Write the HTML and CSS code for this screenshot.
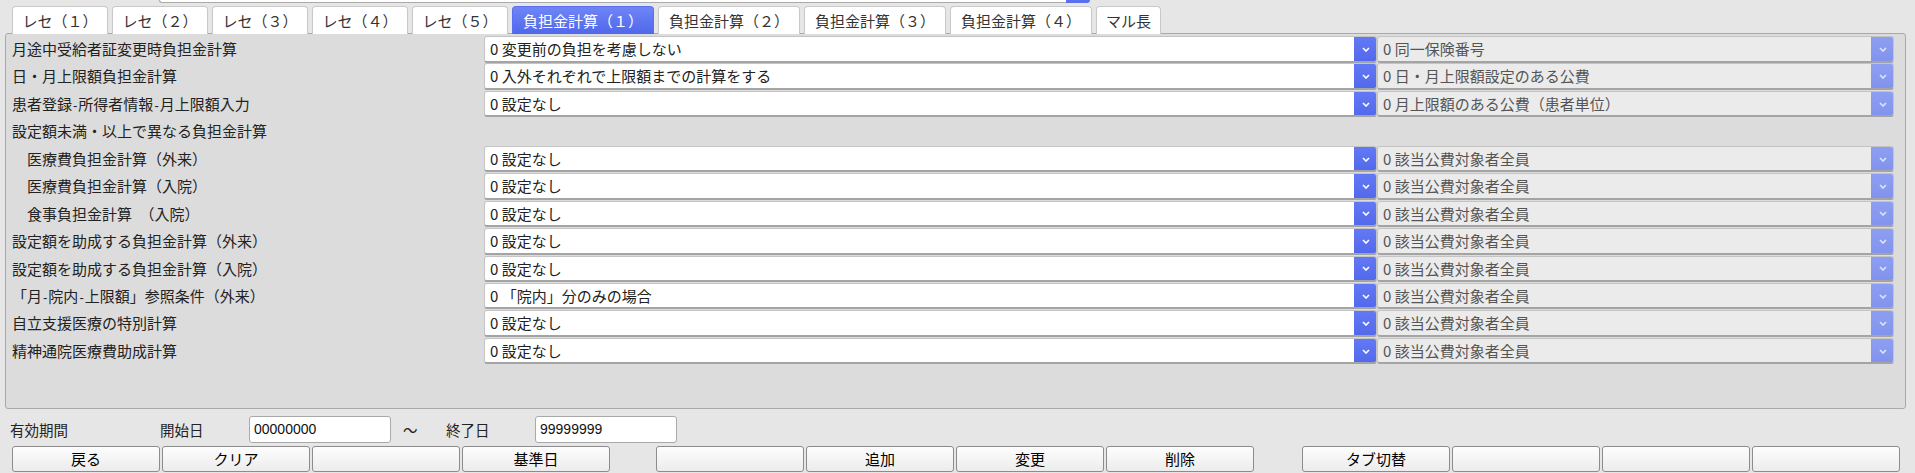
FILE: index.html
```html
<!DOCTYPE html>
<html lang="ja">
<head>
  <meta charset="UTF-8" />
  <title>負担金計算（１）</title>
  <link rel="stylesheet" href="styles.css">
</head>
<body>
  <div class="top-strip">
    <div class="cut-select">
      <span class="cut-field"></span>
      <span class="cut-btn"></span>
    </div>
  </div>

  <div class="tabs">
    <div class="tab short">レセ（１）</div>
    <div class="tab short">レセ（２）</div>
    <div class="tab short">レセ（３）</div>
    <div class="tab short">レセ（４）</div>
    <div class="tab short">レセ（５）</div>
    <div class="tab long active">負担金計算（１）</div>
    <div class="tab long">負担金計算（２）</div>
    <div class="tab long">負担金計算（３）</div>
    <div class="tab long">負担金計算（４）</div>
    <div class="tab tiny">マル長</div>
  </div>

  <div class="panel">
    <div class="row">
      <div class="label">月途中受給者証変更時負担金計算</div>
      <div class="select"><span class="value">0 変更前の負担を考慮しない</span><span class="drop"><svg viewBox="0 0 8 5"><polyline points="1,1 4,4 7,1"/></svg></span></div>
      <div class="select off"><span class="value">0 同一保険番号</span><span class="drop"><svg viewBox="0 0 8 5"><polyline points="1,1 4,4 7,1"/></svg></span></div>
    </div>
    <div class="row">
      <div class="label">日・月上限額負担金計算</div>
      <div class="select"><span class="value">0 入外それぞれで上限額までの計算をする</span><span class="drop"><svg viewBox="0 0 8 5"><polyline points="1,1 4,4 7,1"/></svg></span></div>
      <div class="select off"><span class="value">0 日・月上限額設定のある公費</span><span class="drop"><svg viewBox="0 0 8 5"><polyline points="1,1 4,4 7,1"/></svg></span></div>
    </div>
    <div class="row">
      <div class="label">患者登録<span class="dash">-</span>所得者情報<span class="dash">-</span>月上限額入力</div>
      <div class="select"><span class="value">0 設定なし</span><span class="drop"><svg viewBox="0 0 8 5"><polyline points="1,1 4,4 7,1"/></svg></span></div>
      <div class="select off"><span class="value">0 月上限額のある公費（患者単位）</span><span class="drop"><svg viewBox="0 0 8 5"><polyline points="1,1 4,4 7,1"/></svg></span></div>
    </div>
    <div class="row">
      <div class="label">設定額未満・以上で異なる負担金計算</div>
    </div>
    <div class="row">
      <div class="label sub">医療費負担金計算（外来）</div>
      <div class="select"><span class="value">0 設定なし</span><span class="drop"><svg viewBox="0 0 8 5"><polyline points="1,1 4,4 7,1"/></svg></span></div>
      <div class="select off"><span class="value">0 該当公費対象者全員</span><span class="drop"><svg viewBox="0 0 8 5"><polyline points="1,1 4,4 7,1"/></svg></span></div>
    </div>
    <div class="row">
      <div class="label sub">医療費負担金計算（入院）</div>
      <div class="select"><span class="value">0 設定なし</span><span class="drop"><svg viewBox="0 0 8 5"><polyline points="1,1 4,4 7,1"/></svg></span></div>
      <div class="select off"><span class="value">0 該当公費対象者全員</span><span class="drop"><svg viewBox="0 0 8 5"><polyline points="1,1 4,4 7,1"/></svg></span></div>
    </div>
    <div class="row">
      <div class="label sub">食事負担金計算　（入院）</div>
      <div class="select"><span class="value">0 設定なし</span><span class="drop"><svg viewBox="0 0 8 5"><polyline points="1,1 4,4 7,1"/></svg></span></div>
      <div class="select off"><span class="value">0 該当公費対象者全員</span><span class="drop"><svg viewBox="0 0 8 5"><polyline points="1,1 4,4 7,1"/></svg></span></div>
    </div>
    <div class="row">
      <div class="label">設定額を助成する負担金計算（外来）</div>
      <div class="select"><span class="value">0 設定なし</span><span class="drop"><svg viewBox="0 0 8 5"><polyline points="1,1 4,4 7,1"/></svg></span></div>
      <div class="select off"><span class="value">0 該当公費対象者全員</span><span class="drop"><svg viewBox="0 0 8 5"><polyline points="1,1 4,4 7,1"/></svg></span></div>
    </div>
    <div class="row">
      <div class="label">設定額を助成する負担金計算（入院）</div>
      <div class="select"><span class="value">0 設定なし</span><span class="drop"><svg viewBox="0 0 8 5"><polyline points="1,1 4,4 7,1"/></svg></span></div>
      <div class="select off"><span class="value">0 該当公費対象者全員</span><span class="drop"><svg viewBox="0 0 8 5"><polyline points="1,1 4,4 7,1"/></svg></span></div>
    </div>
    <div class="row">
      <div class="label">「月<span class="dash">-</span>院内<span class="dash">-</span>上限額」参照条件（外来）</div>
      <div class="select"><span class="value">0 「院内」分のみの場合</span><span class="drop"><svg viewBox="0 0 8 5"><polyline points="1,1 4,4 7,1"/></svg></span></div>
      <div class="select off"><span class="value">0 該当公費対象者全員</span><span class="drop"><svg viewBox="0 0 8 5"><polyline points="1,1 4,4 7,1"/></svg></span></div>
    </div>
    <div class="row">
      <div class="label">自立支援医療の特別計算</div>
      <div class="select"><span class="value">0 設定なし</span><span class="drop"><svg viewBox="0 0 8 5"><polyline points="1,1 4,4 7,1"/></svg></span></div>
      <div class="select off"><span class="value">0 該当公費対象者全員</span><span class="drop"><svg viewBox="0 0 8 5"><polyline points="1,1 4,4 7,1"/></svg></span></div>
    </div>
    <div class="row">
      <div class="label">精神通院医療費助成計算</div>
      <div class="select"><span class="value">0 設定なし</span><span class="drop"><svg viewBox="0 0 8 5"><polyline points="1,1 4,4 7,1"/></svg></span></div>
      <div class="select off"><span class="value">0 該当公費対象者全員</span><span class="drop"><svg viewBox="0 0 8 5"><polyline points="1,1 4,4 7,1"/></svg></span></div>
    </div>
  </div>

  <div class="period">
    <span class="p-title">有効期間</span>
    <span class="p-label">開始日</span>
    <input class="p-input" type="text" value="00000000">
    <span class="p-tilde">～</span>
    <span class="p-label end">終了日</span>
    <input class="p-input" type="text" value="99999999">
  </div>

  <div class="buttons">
    <div class="group">
      <button>戻る</button>
      <button>クリア</button>
      <button></button>
      <button>基準日</button>
    </div>
    <div class="group">
      <button></button>
      <button>追加</button>
      <button>変更</button>
      <button>削除</button>
    </div>
    <div class="group">
      <button>タブ切替</button>
      <button></button>
      <button></button>
      <button></button>
    </div>
  </div>
</body>
</html>
```

FILE: styles.css
```css
:root {
  --page-bg: #e6e6e6;
  --panel-bg: #dcdcdc;
  --blue: #5a70f1;
  --blue-off: #8a9bef;
  --ink: #222;
}

body {
  margin: 0;
  width: 1915px;
  height: 473px;
  overflow: hidden;
  background: var(--page-bg);
  color: var(--ink);
  font-family: "Noto Sans CJK JP", "Noto Sans", sans-serif;
  font-size: 15px;
}

/* select scrolled off above the tabs */
.top-strip {
  height: 3px;
  padding-left: 159px;
  overflow: hidden;
  display: flex;
  align-items: flex-end;
}

.cut-select {
  display: flex;
  height: 20px;
  width: 931px;
}

.cut-field {
  flex: 1;
  background: #fff;
  border: 1px solid #aaa;
  border-right: none;
  border-radius: 0 0 0 3px;
}

.cut-btn {
  width: 24px;
  background: var(--blue);
  border-radius: 0 0 3px 0;
}

/* tabs */
.tabs {
  display: flex;
  gap: 4px;
  margin-top: 3px;
  padding-left: 12px;
  height: 27px;
  position: relative;
  z-index: 1;
}

.tab {
  box-sizing: border-box;
  height: 28px;
  background: #fff;
  border: 1px solid #c9c9c9;
  border-bottom: none;
  border-radius: 4px 4px 0 0;
  color: #333;
  text-align: center;
  line-height: 27px;
  font-size: 15px;
}

.tab.short { width: 96px; }
.tab.long { width: 142px; }
.tab.tiny { width: 65px; }

.tab.active {
  background: linear-gradient(#6f85f6, #5067ec);
  border-color: #5a70f1;
  color: #fff;
}

/* main panel */
.panel {
  box-sizing: border-box;
  margin-left: 5px;
  width: 1901px;
  height: 376px;
  background: var(--panel-bg);
  border: 1px solid #a9a9a9;
  border-radius: 3px;
  padding: 2px 0 0 6px;
}

.row {
  display: grid;
  grid-template-columns: 472px 893px 517px;
  height: 27.45px;
  align-items: start;
}

.label {
  line-height: 26px;
  white-space: nowrap;
  color: #222;
}

.label.sub {
  padding-left: 15px;
}

.label .dash {
  font-family: "Liberation Sans", sans-serif;
  font-size: 13px;
  margin: 0 1px;
}

.select {
  box-sizing: border-box;
  display: flex;
  height: 26.5px;
  background: #fff;
  border: 1px solid #c4c4c4;
  border-bottom: 2px solid #a4a4a4;
  border-radius: 3px;
  overflow: hidden;
}

.select .value {
  flex: 1;
  padding-left: 5px;
  line-height: 23px;
  white-space: nowrap;
}

.select .drop {
  width: 23px;
  margin: -1px -1px -2px 0;
  background: linear-gradient(#6379f4, #5168ec);
  display: flex;
  align-items: center;
  justify-content: center;
}

.drop svg {
  width: 8px;
  height: 5px;
  fill: none;
  stroke: #fff;
  stroke-width: 1.6;
}

.select.off {
  background: #ebebeb;
  color: #555;
}

.select.off .drop {
  background: linear-gradient(#8e9ff2, #8092ec);
}

.select.off .drop svg {
  stroke: #dfe4fb;
}

/* period */
.period {
  display: flex;
  align-items: center;
  height: 28px;
  margin-top: 6px;
  padding-left: 10px;
  font-size: 14.5px;
}

.p-title { width: 150px; }
.p-label { width: 89px; }
.p-label.end { width: 89px; }

.p-input {
  box-sizing: border-box;
  width: 142px;
  height: 27px;
  border: 1px solid #aaa;
  border-radius: 3px;
  background: #fff;
  padding: 0 4px;
  font-family: "Liberation Sans", sans-serif;
  font-size: 14px;
  color: #111;
}

.p-tilde {
  width: 55px;
  padding-left: 12px;
  box-sizing: border-box;
}

/* buttons */
.buttons {
  display: flex;
  gap: 46px;
  padding-left: 12px;
  margin-top: 3px;
}

.group {
  display: flex;
  gap: 2px;
}

.group + .group + .group {
  margin-left: 2px;
}

button {
  box-sizing: border-box;
  width: 148px;
  height: 26px;
  border: 1px solid #8c8c8c;
  border-radius: 3px;
  background: linear-gradient(#fdfdfd, #ececec);
  font-family: "Noto Sans CJK JP", sans-serif;
  font-size: 15px;
  color: #000;
  padding: 0;
  line-height: 24px;
}
```
